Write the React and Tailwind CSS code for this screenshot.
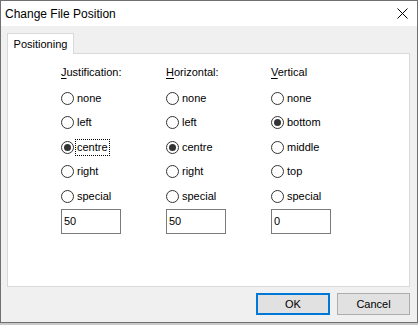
import { useState } from "react";

const font = "font-['Liberation_Sans',Arial,sans-serif]";

function Radio({ label, checked, focused, onClick }) {
  return (
    <div className="h-[24.5px] flex items-center cursor-default" onClick={onClick}>
      <span className="w-[13px] h-[13px] rounded-full border border-[#333] bg-white flex items-center justify-center shrink-0">
        {checked && <span className="w-[7px] h-[7px] rounded-full bg-[#333]" />}
      </span>
      <span
        className={`ml-[3px] leading-[13px] ${focused ? "outline outline-1 outline-dotted outline-black outline-offset-[1px]" : ""}`}
      >
        {label}
      </span>
    </div>
  );
}

function Column({ hot, rest, options, value, onChange, text, focus }) {
  return (
    <div className="w-[105px] flex flex-col">
      <div className="h-[13px] leading-[13px]">
        <span className="underline underline-offset-[2px]">{hot}</span>
        {rest}
      </div>
      <div className="mt-[7px] flex flex-col">
        {options.map((o) => (
          <Radio key={o} label={o} checked={value === o} focused={focus && value === o} onClick={() => onChange(o)} />
        ))}
      </div>
      <input
        defaultValue={text}
        className="mt-[0.5px] w-[60px] h-[25px] border border-[#7a7a7a] bg-white px-[2px] pb-[2px] text-[11px] text-black outline-none"
      />
    </div>
  );
}

export default function App() {
  const [just, setJust] = useState("centre");
  const [horiz, setHoriz] = useState("centre");
  const [vert, setVert] = useState("bottom");
  const hOpts = ["none", "left", "centre", "right", "special"];

  return (
    <div className={`w-[418px] h-[325px] bg-[#c9c9c9] ${font} text-black`}>
      <div className="w-[418px] h-[323px] border border-[#707070] flex flex-col">
        {/* title bar */}
        <div className="h-[25px] bg-white flex items-center pl-[4px] shrink-0">
          <span className="text-[12px]">Change File Position</span>
          <svg className="ml-auto mr-[9px]" width="11" height="11" viewBox="0 0 11 11">
            <path d="M0.5 0.5 L10.5 10.5 M10.5 0.5 L0.5 10.5" stroke="#000" strokeWidth="1" fill="none" />
          </svg>
        </div>

        {/* body */}
        <div className="flex-1 bg-[#f0f0f0] pt-[7px] pl-[6px] pr-[7px] flex flex-col">
          <div className="relative z-10 -mb-px w-[67px] h-[21px] bg-white border border-b-0 border-[#d9d9d9] flex items-center justify-center text-[11px]">
            Positioning
          </div>
          <div className="h-[234px] bg-white border border-[#d9d9d9] pt-[12px] pl-[53px] flex text-[11px]">
            <Column hot="J" rest="ustification:" options={hOpts} value={just} onChange={setJust} text="50" focus />
            <Column hot="H" rest="orizontal:" options={hOpts} value={horiz} onChange={setHoriz} text="50" />
            <Column hot="V" rest="ertical" options={["none", "bottom", "middle", "top", "special"]} value={vert} onChange={setVert} text="0" />
          </div>

          <div className="mt-[6px] flex justify-end gap-[7px] text-[11px]">
            <button className="w-[74px] h-[22px] bg-[#e1e1e1] border-2 border-[#0078d7]">OK</button>
            <button className="w-[73px] h-[22px] bg-[#e1e1e1] border border-[#adadad]">Cancel</button>
          </div>
        </div>
      </div>
    </div>
  );
}
